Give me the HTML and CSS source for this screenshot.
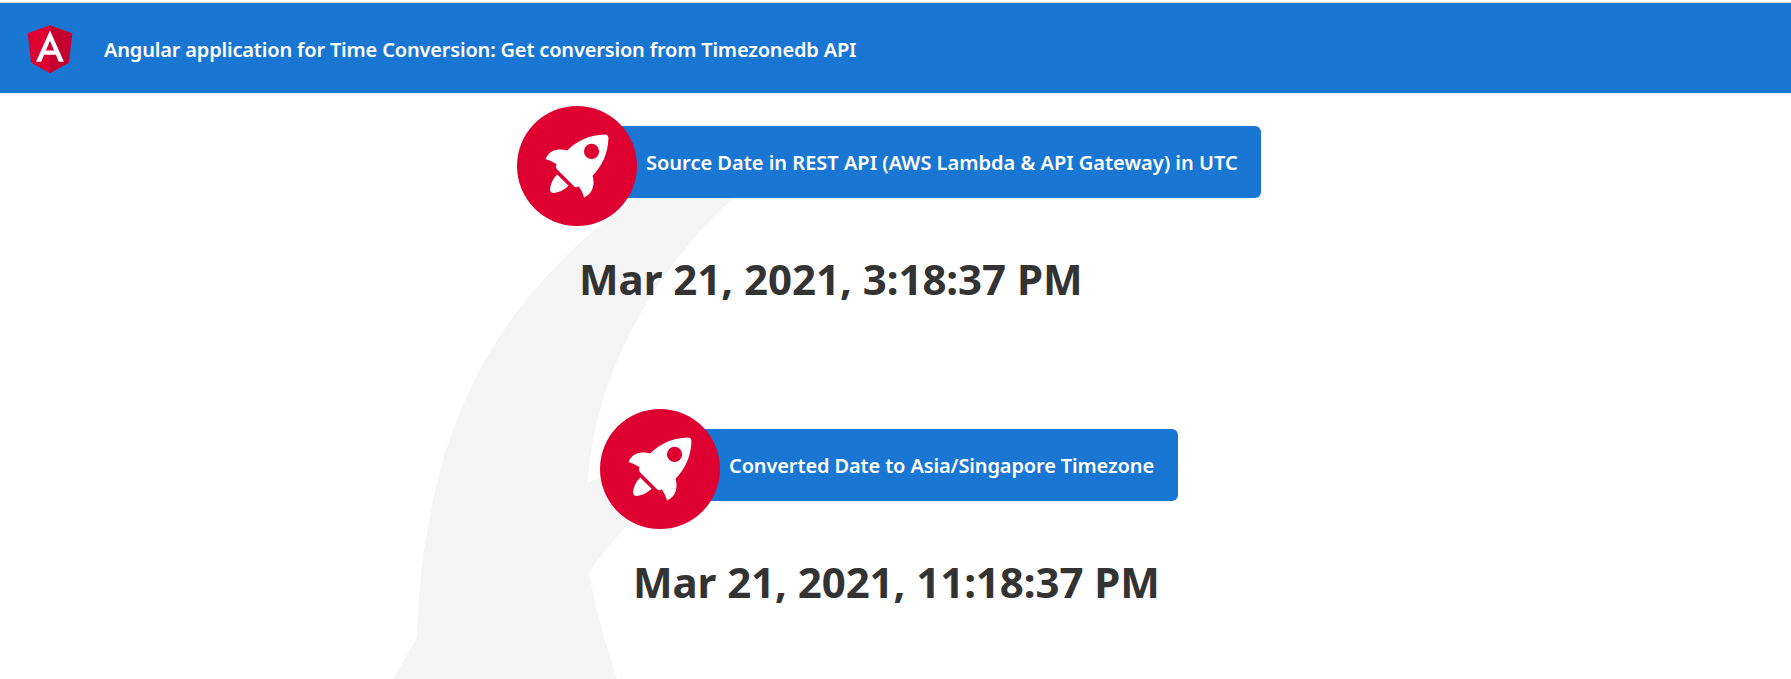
FILE: index.html
```html
<!DOCTYPE html>
<html lang="en">
<head>
<meta charset="utf-8">
<title>Time Conversion</title>
<link rel="stylesheet" href="styles.css">
</head>
<body>
<header class="toolbar">
  <svg class="logo" viewBox="0 0 250 250" aria-hidden="true">
    <path fill="#dd0031" d="M125 30 31.9 63.2l14.2 123.1L125 230z"/>
    <path fill="#c3002f" d="M125 30v200l78.9-43.7 14.2-123.1z"/>
    <path fill="#fff" d="M125 52.1 66.8 182.6h21.7l11.7-29.2h49.4l11.7 29.2H183L125 52.1zm17 83.3h-34l17-40.9z"/>
  </svg>
  <span class="toolbar-title">Angular application for Time Conversion: Get conversion from Timezonedb API</span>
</header>
<main class="content">
  <svg class="smoke" viewBox="380 93 420 586" aria-hidden="true">
    <path d="M720 148 L637 198 C596 225 559 260 525 301 C484 353 456 411 440 471 C426 525 418 582 417.2 637.500 Q405 657 393.500 679 H617.300 Q597 620 589 571.700 Q606 548 628.500 524 L660 492 V455 L587.700 482 C596 375 650 275 733 198 L790 148Z"/>
  </svg>
  <section class="conversion">
    <div class="card">
      <svg class="rocket" viewBox="0 0 101.678 101.678" aria-hidden="true">
        <circle cx="50.839" cy="50.839" r="50.839" fill="#dd0031"/>
        <g transform="translate(24.185 24.185)" fill="#fff">
          <path transform="translate(.371 3.363)" d="M3.4,42.615a3.084,3.084,0,0,0,3.553,3.553,21.419,21.419,0,0,0,12.215-6.107L9.511,30.4A21.419,21.419,0,0,0,3.4,42.615Z"/>
          <path d="M53.3,3.221A3.09,3.09,0,0,0,50.081,0,48.227,48.227,0,0,0,18.322,13.437c-6-1.666-14.991-1.221-18.322,7.218A33.892,33.892,0,0,1,9.439,25.1l-.333.666a3.013,3.013,0,0,0,.555,3.553L23.985,43.641a2.9,2.9,0,0,0,3.553.555l.666-.333A33.892,33.892,0,0,1,32.647,53.3c8.55-3.664,8.884-12.326,7.218-18.322A48.227,48.227,0,0,0,53.3,3.221ZM34.424,9.772a6.439,6.439,0,1,1,9.106,9.106,6.368,6.368,0,0,1-9.106,0A6.467,6.467,0,0,1,34.424,9.772Z"/>
        </g>
      </svg>
      <div class="pill pill-source"><span class="label label-source">Source Date in REST API (AWS Lambda &amp; API Gateway) in UTC</span></div>
    </div>
    <h2 class="date date-source">Mar 21, 2021, 3:18:37 PM</h2>
  </section>
  <section class="conversion">
    <div class="card">
      <svg class="rocket" viewBox="0 0 101.678 101.678" aria-hidden="true">
        <circle cx="50.839" cy="50.839" r="50.839" fill="#dd0031"/>
        <g transform="translate(24.185 24.185)" fill="#fff">
          <path transform="translate(.371 3.363)" d="M3.4,42.615a3.084,3.084,0,0,0,3.553,3.553,21.419,21.419,0,0,0,12.215-6.107L9.511,30.4A21.419,21.419,0,0,0,3.4,42.615Z"/>
          <path d="M53.3,3.221A3.09,3.09,0,0,0,50.081,0,48.227,48.227,0,0,0,18.322,13.437c-6-1.666-14.991-1.221-18.322,7.218A33.892,33.892,0,0,1,9.439,25.1l-.333.666a3.013,3.013,0,0,0,.555,3.553L23.985,43.641a2.9,2.9,0,0,0,3.553.555l.666-.333A33.892,33.892,0,0,1,32.647,53.3c8.55-3.664,8.884-12.326,7.218-18.322A48.227,48.227,0,0,0,53.3,3.221ZM34.424,9.772a6.439,6.439,0,1,1,9.106,9.106,6.368,6.368,0,0,1-9.106,0A6.467,6.467,0,0,1,34.424,9.772Z"/>
        </g>
      </svg>
      <div class="pill pill-converted"><span class="label label-converted">Converted Date to Asia/Singapore Timezone</span></div>
    </div>
    <h2 class="date date-converted">Mar 21, 2021, 11:18:37 PM</h2>
  </section>
</main>
</body>
</html>
```
FILE: styles.css
```css
* { box-sizing: border-box; }
body {
  margin: 0;
  height: 679px;
  overflow: hidden;
  border-top: 2px solid #f8f9fa;
  background: #fff;
  color: #333;
  font-family: "Noto Sans", "Open Sans", sans-serif;
  display: flex;
  flex-direction: column;
}
.toolbar {
  flex: none;
  height: 91px;
  border-top: 1px solid #dfe0e2;
  background: #1976d2;
  color: #fff;
  display: flex;
  align-items: center;
  padding-left: 20px;
}
.logo { width: 60px; height: 60px; margin-right: 24px; }
.toolbar-title { font-size: 20px; font-weight: 600; line-height: 30px; white-space: nowrap; letter-spacing: -0.18px; padding-top: 3px; }
.content { position: relative; flex: 1; padding: 13px 13px 0 0; }
.smoke { position: absolute; left: 380px; top: 0; width: 420px; height: 586px; fill: #f5f5f5; }
.conversion { position: relative; height: 303px; }
.card { display: flex; justify-content: center; align-items: center; height: 120px; }
.rocket { position: relative; z-index: 1; flex: none; width: 120px; height: 120px; margin-right: -20px; }
.pill {
  height: 72px;
  margin-bottom: 8px;
  padding: 1px 0 0 29px;
  border-radius: 6px;
  background: #1976d2;
  color: #fff;
  display: flex;
  align-items: center;
}
.pill-source { width: 644px; }
.pill-converted { width: 478px; }
.label { font-size: 20px; font-weight: 600; line-height: 30px; white-space: nowrap; }
.label-source { letter-spacing: 0; }
.label-converted { letter-spacing: -0.13px; }
.date { margin: 23px 0 0; font-size: 42px; line-height: 60px; font-weight: 700; white-space: nowrap; }
.date-source { padding-left: 579px; letter-spacing: -0.05px; }
.date-converted { padding-left: 633px; letter-spacing: -0.08px; }
```
